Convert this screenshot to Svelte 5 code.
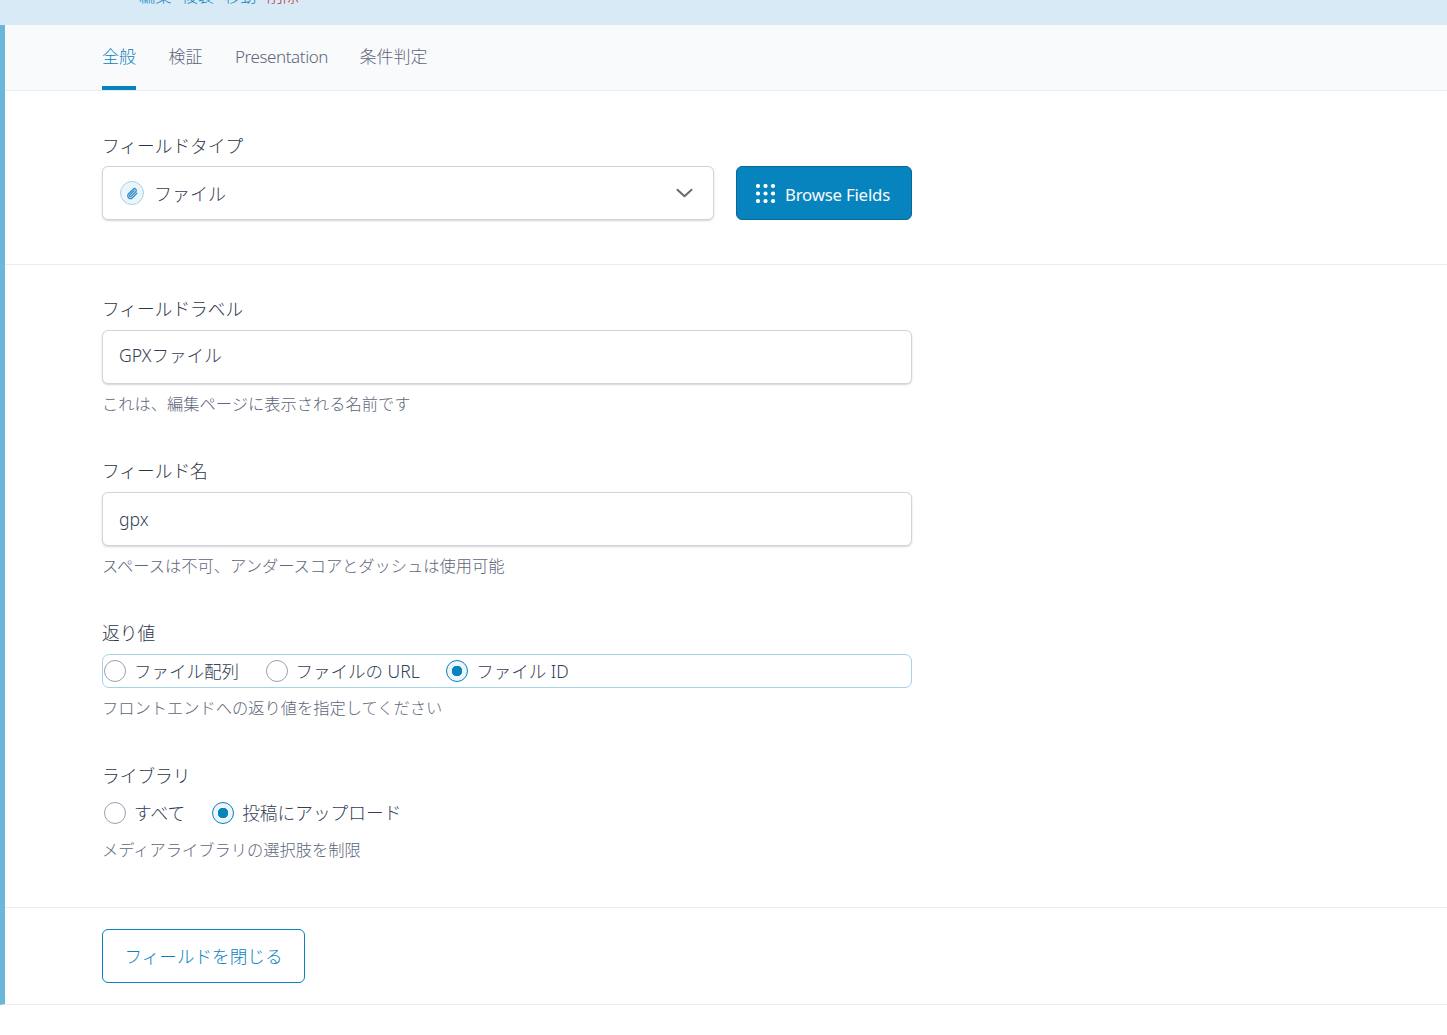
<script lang="ts">
	const tabs = ['全般', '検証', 'Presentation', '条件判定'];
	const topLinks = [
		{ text: '編集', danger: false },
		{ text: '複製', danger: false },
		{ text: '移動', danger: false },
		{ text: '削除', danger: true }
	];
	const returnOptions = [
		{ label: 'ファイル配列', checked: false },
		{ label: 'ファイルの URL', checked: false },
		{ label: 'ファイル ID', checked: true }
	];
	const libraryOptions = [
		{ label: 'すべて', checked: false },
		{ label: '投稿にアップロード', checked: true }
	];
	const dots = [0, 1, 2].flatMap((y) => [0, 1, 2].map((x) => ({ x: 2 + x * 7.5, y: 2 + y * 7.5 })));
</script>

{#snippet radio(opt: { label: string; checked: boolean })}
	<span class="radio-item">
		<span class="radio" class:checked={opt.checked}></span>
		<span class="radio-label">{opt.label}</span>
	</span>
{/snippet}

<div class="top-row">
	<div class="row-actions">
		{#each topLinks as link}
			<span class:danger={link.danger}>{link.text}</span>
		{/each}
	</div>
</div>

<div class="settings">
	<nav class="tabs">
		{#each tabs as tab, i}
			<span class="tab" class:active={i === 0} class:latin={tab === 'Presentation'}>{tab}</span>
		{/each}
	</nav>

	<section class="type-section">
		<div class="label">フィールドタイプ</div>
		<div class="type-row">
			<div class="select">
				<span class="type-icon">
					<svg viewBox="0 0 24 24" width="13" height="13" fill="none" stroke="#2f8fc9" stroke-width="2.4" stroke-linecap="round" stroke-linejoin="round">
						<path d="M20 11.5l-8.2 8.2a5 5 0 0 1-7.1-7.1l8.6-8.6a3.3 3.3 0 0 1 4.7 4.7l-8.6 8.6a1.7 1.7 0 0 1-2.4-2.4l7.9-7.9" />
					</svg>
				</span>
				<span class="select-value">ファイル</span>
				<svg class="chevron" viewBox="0 0 18 10" width="17" height="10" fill="none" stroke="#646970" stroke-width="2" stroke-linecap="round" stroke-linejoin="round">
					<path d="M1.5 1.5L9 8.5l7.5-7" />
				</svg>
			</div>
			<button class="browse">
				<svg viewBox="0 0 19 19" width="19" height="19" fill="#fff">
					{#each dots as d}
						<circle cx={d.x} cy={d.y} r="2.1" />
					{/each}
				</svg>
				<span class="browse-text">Browse Fields</span>
			</button>
		</div>
	</section>

	<section class="fields">
		<div class="field first">
			<div class="label">フィールドラベル</div>
			<div class="input raised">GPXファイル</div>
			<div class="hint">これは、編集ページに表示される名前です</div>
		</div>

		<div class="field">
			<div class="label">フィールド名</div>
			<div class="input">gpx</div>
			<div class="hint">スペースは不可、アンダースコアとダッシュは使用可能</div>
		</div>

		<div class="field">
			<div class="label">返り値</div>
			<div class="radio-box">
				{#each returnOptions as opt}
					{@render radio(opt)}
				{/each}
			</div>
			<div class="hint">フロントエンドへの返り値を指定してください</div>
		</div>

		<div class="field library">
			<div class="label">ライブラリ</div>
			<div class="radio-plain">
				{#each libraryOptions as opt}
					{@render radio(opt)}
				{/each}
			</div>
			<div class="hint">メディアライブラリの選択肢を制限</div>
		</div>
	</section>

	<footer class="close-row">
		<button class="close">フィールドを閉じる</button>
	</footer>
</div>

<style>
	:global(body) {
		background: #fff;
		font-family: 'Noto Sans', 'Noto Sans CJK JP', sans-serif;
		color: #344054;
	}

	.top-row {
		height: 25px;
		background: #d8eaf5;
		overflow: hidden;
	}

	.row-actions {
		display: flex;
		gap: 10px;
		margin-top: -15px;
		padding-left: 139px;
		font-size: 16.25px;
		line-height: 22px;
		font-weight: 300;
		color: #0783be;
	}

	.danger {
		color: #b32d2e;
	}

	.settings {
		border-left: 5px solid #6bb7dc;
		height: 980px;
		box-sizing: border-box;
		border-bottom: 1px solid #eaecf0;
	}

	.tabs {
		display: flex;
		gap: 32.5px;
		height: 66px;
		box-sizing: border-box;
		padding-left: 97px;
		background: #f9fafb;
		border-bottom: 1px solid #eaecf0;
	}

	.tab {
		height: 65px;
		box-sizing: border-box;
		padding-top: 20px;
		font-size: 17px;
		line-height: 24px;
		font-weight: 300;
		color: #5d667a;
	}

	.tab.latin {
		letter-spacing: -0.42px;
		margin-right: -1px;
	}

	.tab.active {
		color: #0783be;
		border-bottom: 4px solid #0783be;
	}

	.type-section {
		height: 174px;
		box-sizing: border-box;
		padding: 43px 0 0 97px;
		border-bottom: 1px solid #eaecf0;
	}

	.label {
		font-size: 17.7px;
		line-height: 24px;
		font-weight: 300;
		color: #2b3648;
		margin-bottom: 8px;
	}

	.type-row {
		display: flex;
		gap: 22px;
	}

	.select,
	.input {
		height: 54px;
		box-sizing: border-box;
		background: #fff;
		border: 1px solid #d0d5dd;
		border-radius: 6px;
		box-shadow: 0 1px 2px rgba(16, 24, 40, 0.18);
		display: flex;
		align-items: center;
		font-weight: 300;
	}

	.select {
		width: 612px;
		padding: 0 20px 0 17px;
	}

	.type-icon {
		width: 22px;
		height: 22px;
		border-radius: 50%;
		background: #ebf5fa;
		border: 1px solid #a5d2e7;
		display: flex;
		align-items: center;
		justify-content: center;
		margin-right: 10px;
	}

	.select-value {
		flex: 1;
		font-size: 18px;
		color: #344054;
		padding-bottom: 1px;
	}

	.chevron {
		display: block;
	}

	.browse {
		width: 176px;
		height: 54px;
		box-sizing: border-box;
		background: #0783be;
		border: 1px solid #066998;
		border-radius: 6px;
		color: #f9fafb;
		font-family: inherit;
		font-size: 16.8px;
		letter-spacing: -0.2px;
		display: flex;
		align-items: center;
		gap: 10px;
		padding: 0 0 0 19px;
	}

	.browse-text {
		padding-top: 2px;
	}

	.fields {
		padding: 32px 0 0 97px;
		height: 643px;
		box-sizing: border-box;
		border-bottom: 1px solid #eaecf0;
	}

	.field {
		width: 810px;
		margin-top: 43px;
	}

	.field.first {
		margin-top: 0;
	}

	.field.library {
		margin-top: 44px;
	}

	.field .label {
		margin-bottom: 9px;
	}

	.input {
		padding: 0 16px;
		color: #344054;
		font-size: 17.6px;
	}

	.input.raised {
		padding-bottom: 5px;
	}

	.hint {
		margin-top: 8px;
		font-size: 16.25px;
		line-height: 24px;
		font-weight: 300;
		color: #5d667a;
	}

	.radio-box {
		height: 34px;
		box-sizing: border-box;
		border: 1px solid #a5d2e7;
		border-radius: 7px;
		display: flex;
		align-items: center;
		gap: 26.5px;
		padding-left: 1px;
		font-size: 17.5px;
		font-weight: 300;
		color: #344054;
	}

	.radio-plain {
		height: 34px;
		display: flex;
		align-items: center;
		gap: 27px;
		padding-left: 2px;
		margin-bottom: 1px;
		margin-top: -1px;
		font-size: 17.7px;
		font-weight: 300;
		color: #344054;
	}

	.radio-item {
		display: flex;
		align-items: center;
		gap: 8px;
	}

	.radio-label {
		padding-bottom: 2px;
	}

	.radio {
		width: 22px;
		height: 22px;
		box-sizing: border-box;
		border-radius: 50%;
		border: 1px solid #98a2b3;
		background: #fff;
	}

	.radio.checked {
		border-color: #0783be;
		background: radial-gradient(circle, #0783be 0 5px, #ebf5fa 5.5px);
	}

	.close-row {
		padding: 21px 0 0 97px;
	}

	.close {
		width: 203px;
		height: 54px;
		box-sizing: border-box;
		background: #fff;
		border: 1px solid #0783be;
		border-radius: 6px;
		color: #0783be;
		font-family: inherit;
		font-size: 17.6px;
		font-weight: 300;
		padding: 0 0 2px;
	}
</style>
